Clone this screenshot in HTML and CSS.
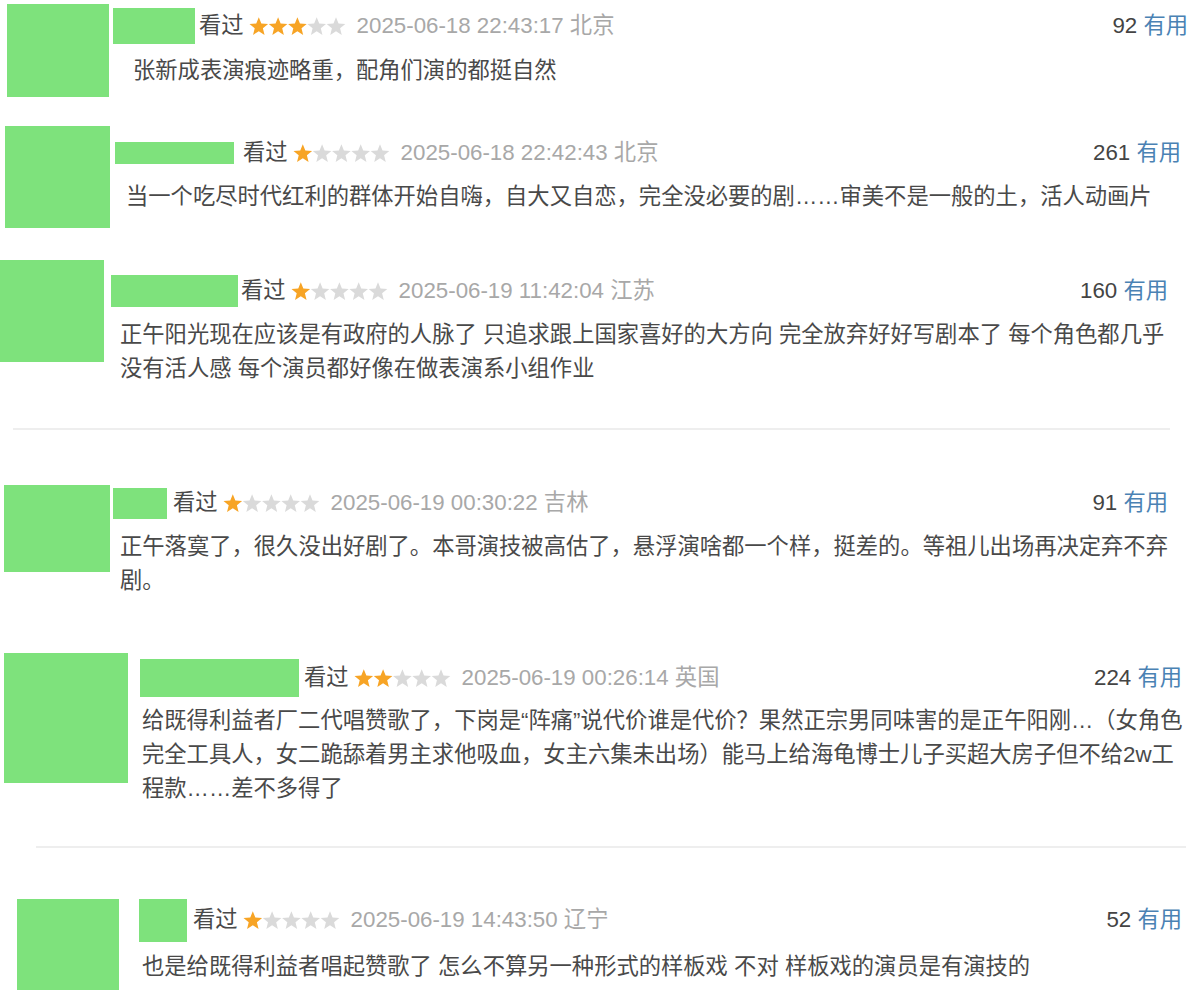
FILE: index.html
```html
<!DOCTYPE html>
<html lang="zh-CN">
<head>
<meta charset="utf-8">
<title>短评</title>
<link rel="stylesheet" href="styles.css">
</head>
<body>
<svg class="defs" width="0" height="0" aria-hidden="true">
  <defs>
    <symbol id="star" viewBox="0 0 20 19">
      <polygon points="10,0.2 12.59,6.64 19.51,7.11 14.18,11.56 15.88,18.29 10,14.6 4.12,18.29 5.82,11.56 0.49,7.11 7.41,6.64"/>
    </symbol>
  </defs>
</svg>

<div class="comment c1">
  <div class="avatar"></div>
  <div class="body">
    <div class="info">
      <span class="name"></span>
      <span class="watched">看过</span>
      <svg class="stars" width="97" height="19" viewBox="0 0 97 19">
        <use href="#star" x="0" width="19.6" height="18.6" class="on"/>
        <use href="#star" x="19.3" width="19.6" height="18.6" class="on"/>
        <use href="#star" x="38.6" width="19.6" height="18.6" class="on"/>
        <use href="#star" x="57.9" width="19.6" height="18.6" class="off"/>
        <use href="#star" x="77.2" width="19.6" height="18.6" class="off"/>
      </svg>
      <span class="time">2025-06-18 22:43:17 北京</span>
      <span class="votes"><span class="count">92</span> <a href="#">有用</a></span>
    </div>
    <p class="short">张新成表演痕迹略重，配角们演的都挺自然</p>
  </div>
</div>

<div class="comment c2">
  <div class="avatar"></div>
  <div class="body">
    <div class="info">
      <span class="name"></span>
      <span class="watched">看过</span>
      <svg class="stars" width="97" height="19" viewBox="0 0 97 19">
        <use href="#star" x="0" width="19.6" height="18.6" class="on"/>
        <use href="#star" x="19.3" width="19.6" height="18.6" class="off"/>
        <use href="#star" x="38.6" width="19.6" height="18.6" class="off"/>
        <use href="#star" x="57.9" width="19.6" height="18.6" class="off"/>
        <use href="#star" x="77.2" width="19.6" height="18.6" class="off"/>
      </svg>
      <span class="time">2025-06-18 22:42:43 北京</span>
      <span class="votes"><span class="count">261</span> <a href="#">有用</a></span>
    </div>
    <p class="short">当一个吃尽时代红利的群体开始自嗨，自大又自恋，完全没必要的剧……审美不是一般的土，活人动画片</p>
  </div>
</div>

<div class="comment c3">
  <div class="avatar"></div>
  <div class="body">
    <div class="info">
      <span class="name"></span>
      <span class="watched">看过</span>
      <svg class="stars" width="97" height="19" viewBox="0 0 97 19">
        <use href="#star" x="0" width="19.6" height="18.6" class="on"/>
        <use href="#star" x="19.3" width="19.6" height="18.6" class="off"/>
        <use href="#star" x="38.6" width="19.6" height="18.6" class="off"/>
        <use href="#star" x="57.9" width="19.6" height="18.6" class="off"/>
        <use href="#star" x="77.2" width="19.6" height="18.6" class="off"/>
      </svg>
      <span class="time">2025-06-19 11:42:04 江苏</span>
      <span class="votes"><span class="count">160</span> <a href="#">有用</a></span>
    </div>
    <p class="short">正午阳光现在应该是有政府的人脉了 只追求跟上国家喜好的大方向 完全放弃好好写剧本了 每个角色都几乎没有活人感 每个演员都好像在做表演系小组作业</p>
  </div>
</div>

<div class="divider d1"></div>

<div class="comment c4">
  <div class="avatar"></div>
  <div class="body">
    <div class="info">
      <span class="name"></span>
      <span class="watched">看过</span>
      <svg class="stars" width="97" height="19" viewBox="0 0 97 19">
        <use href="#star" x="0" width="19.6" height="18.6" class="on"/>
        <use href="#star" x="19.3" width="19.6" height="18.6" class="off"/>
        <use href="#star" x="38.6" width="19.6" height="18.6" class="off"/>
        <use href="#star" x="57.9" width="19.6" height="18.6" class="off"/>
        <use href="#star" x="77.2" width="19.6" height="18.6" class="off"/>
      </svg>
      <span class="time">2025-06-19 00:30:22 吉林</span>
      <span class="votes"><span class="count">91</span> <a href="#">有用</a></span>
    </div>
    <p class="short">正午落寞了，很久没出好剧了。本哥演技被高估了，悬浮演啥都一个样，挺差的。等祖儿出场再决定弃不弃剧。</p>
  </div>
</div>

<div class="comment c5">
  <div class="avatar"></div>
  <div class="body">
    <div class="info">
      <span class="name"></span>
      <span class="watched">看过</span>
      <svg class="stars" width="97" height="19" viewBox="0 0 97 19">
        <use href="#star" x="0" width="19.6" height="18.6" class="on"/>
        <use href="#star" x="19.3" width="19.6" height="18.6" class="on"/>
        <use href="#star" x="38.6" width="19.6" height="18.6" class="off"/>
        <use href="#star" x="57.9" width="19.6" height="18.6" class="off"/>
        <use href="#star" x="77.2" width="19.6" height="18.6" class="off"/>
      </svg>
      <span class="time">2025-06-19 00:26:14 英国</span>
      <span class="votes"><span class="count">224</span> <a href="#">有用</a></span>
    </div>
    <p class="short">给既得利益者厂二代唱赞歌了，下岗是“阵痛”说代价谁是代价？果然正宗男同味害的是正午阳刚…（女角色完全工具人，女二跪舔着男主求他吸血，女主六集未出场）能马上给海龟博士儿子买超大房子但不给2w工程款……差不多得了</p>
  </div>
</div>

<div class="divider d2"></div>

<div class="comment c6">
  <div class="avatar"></div>
  <div class="body">
    <div class="info">
      <span class="name"></span>
      <span class="watched">看过</span>
      <svg class="stars" width="97" height="19" viewBox="0 0 97 19">
        <use href="#star" x="0" width="19.6" height="18.6" class="on"/>
        <use href="#star" x="19.3" width="19.6" height="18.6" class="off"/>
        <use href="#star" x="38.6" width="19.6" height="18.6" class="off"/>
        <use href="#star" x="57.9" width="19.6" height="18.6" class="off"/>
        <use href="#star" x="77.2" width="19.6" height="18.6" class="off"/>
      </svg>
      <span class="time">2025-06-19 14:43:50 辽宁</span>
      <span class="votes"><span class="count">52</span> <a href="#">有用</a></span>
    </div>
    <p class="short">也是给既得利益者唱起赞歌了 怎么不算另一种形式的样板戏 不对 样板戏的演员是有演技的</p>
  </div>
</div>
</body>
</html>
```

FILE: styles.css
```css
html, body {
  margin: 0;
  padding: 0;
  background: #ffffff;
}

body {
  width: 1200px;
  height: 1000px;
  overflow: hidden;
  font-family: "Liberation Sans", "Noto Sans CJK SC", sans-serif;
  font-size: 22.3px;
  color: #494949;
}

.defs {
  position: absolute;
  width: 0;
  height: 0;
}

.comment {
  display: flex;
  align-items: flex-start;
  box-sizing: border-box;
}

.avatar {
  flex: none;
  background: #7ee27c;
}

.body {
  flex: 1;
  min-width: 0;
}

.info {
  display: flex;
  align-items: center;
  height: 44px;
  line-height: 1;
  white-space: nowrap;
}

.name {
  flex: none;
  display: block;
  background: #7ee27c;
}

.watched {
  color: #494949;
  margin-right: 5px;
}

.stars {
  display: block;
  flex: none;
  margin-right: 11px;
}

.stars .on {
  fill: #f7a425;
}

.stars .off {
  fill: #dadada;
}

.time {
  color: #a8a8a8;
}

.votes {
  margin-left: auto;
  color: #444444;
}

.votes a {
  color: #4a82b4;
  text-decoration: none;
}

.short {
  margin: 0;
  line-height: 34px;
  color: #494949;
}

.divider {
  height: 2px;
  background: #eeeeee;
}

.d1 {
  margin: 0 30px 0 13px;
}

.d2 {
  margin: 0 14px 0 36px;
}

/* comment 1 */
.c1 { height: 115px; padding: 0 12px 0 7px; }
.c1 .avatar { width: 102px; height: 93px; margin-top: 4px; }
.c1 .body { margin-left: 4px; margin-top: 4px; }
.c1 .name { width: 82px; height: 36px; margin-right: 4px; }
.c1 .short { margin-top: 6px; padding-left: 20px; }

/* comment 2 */
.c2 { height: 130px; padding: 0 19px 0 5px; }
.c2 .avatar { width: 105px; height: 102px; margin-top: 11px; }
.c2 .body { margin-left: 5px; margin-top: 16px; }
.c2 .name { width: 119px; height: 22px; margin-right: 9px; }
.c2 .short { margin-top: 5px; padding-left: 11px; width: 1060px; }

/* comment 3 */
.c3 { height: 183px; padding: 0 32px 0 0; }
.c3 .avatar { width: 104px; height: 102px; margin-top: 15px; }
.c3 .body { margin-left: 7px; margin-top: 24px; }
.c3 .name { width: 127px; height: 32px; margin-right: 3px; }
.c3 .short { margin-top: 5px; padding-left: 9px; width: 1055px; }

/* comment 4 */
.c4 { height: 210px; padding: 0 32px 0 4px; }
.c4 .avatar { width: 106px; height: 87px; margin-top: 55px; }
.c4 .body { margin-left: 3px; margin-top: 51px; }
.c4 .name { width: 54px; height: 31px; margin-right: 6px; }
.c4 .short { margin-top: 5px; padding-left: 7px; width: 1058px; }

/* comment 5 */
.c5 { height: 206px; padding: 0 18px 0 4px; }
.c5 .avatar { width: 124px; height: 130px; margin-top: 13px; }
.c5 .body { margin-left: 12px; margin-top: 16px; }
.c5 .name { width: 159px; height: 38px; margin-right: 5px; }
.c5 .short { margin-top: 4px; padding-left: 2px; width: 1047px; }

/* comment 6 */
.c6 { height: 152px; padding: 0 18px 0 17px; }
.c6 .avatar { width: 102px; height: 91px; margin-top: 51px; }
.c6 .body { margin-left: 20px; margin-top: 50px; }
.c6 .name { width: 48px; height: 43px; margin-right: 6px; }
.c6 .short { margin-top: 8px; padding-left: 3px; }
```
